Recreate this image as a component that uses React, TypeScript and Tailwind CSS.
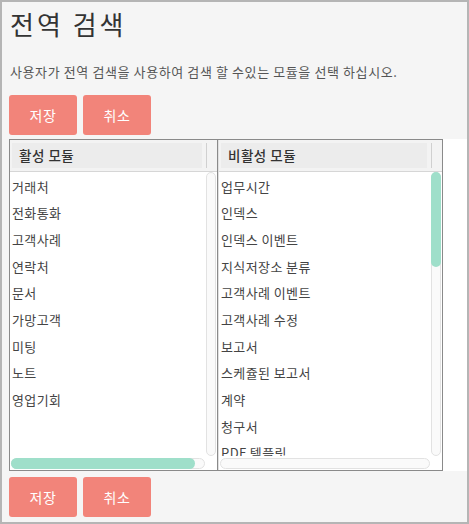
import React from "react";

const activeModules = ["거래처", "전화통화", "고객사례", "연락처", "문서", "가망고객", "미팅", "노트", "영업기회"];
const inactiveModules = [
  "업무시간",
  "인덱스",
  "인덱스 이벤트",
  "지식저장소 분류",
  "고객사례 이벤트",
  "고객사례 수정",
  "보고서",
  "스케쥴된 보고서",
  "계약",
  "청구서",
  "PDF 템플릿",
];

const font = { fontFamily: '"Noto Sans CJK KR", "Noto Sans", sans-serif' };

function Buttons() {
  return (
    <div className="flex gap-[6px] pl-[7px]">
      <button className="h-[40px] w-[68px] rounded-[3px] bg-[#f2847a] text-[14px] tracking-[0.5px] text-white">저장</button>
      <button className="h-[40px] w-[68px] rounded-[3px] bg-[#f2847a] text-[14px] tracking-[0.5px] text-white">취소</button>
    </div>
  );
}

function Panel({
  title,
  items,
  width,
  vThumb,
  hThumb,
}: {
  title: string;
  items: string[];
  width: number;
  vThumb?: boolean;
  hThumb?: boolean;
}) {
  return (
    <div className="flex h-full flex-col" style={{ width }}>
      <div className="flex h-[32px] shrink-0 border-b border-[#d6d6d6] bg-[#f3f3f3] py-[3px] pl-[2px]">
        <div className="flex flex-1 items-center bg-[#ececec] pl-[7px] text-[13.5px] font-medium tracking-[0.5px] text-[#333]">
          {title}
        </div>
        <div className="w-[4px]" />
        <div className="w-[11px] border-l border-[#d0d0d0]" />
      </div>
      <div className="flex min-h-0 flex-1">
        <div className="min-w-0 flex-1 overflow-hidden pt-[1px] pl-[2px]">
          {items.map((it) => (
            <div key={it} className="flex h-[26.7px] items-center whitespace-nowrap text-[13px] tracking-[0.4px] text-[#444]">
              {it}
            </div>
          ))}
        </div>
        <div className="relative mr-[1px] w-[10px] shrink-0 rounded-full border border-[#e2e2e2] bg-[#fafafa]">
          {vThumb && <div className="absolute -left-px -top-px h-[95px] w-[10px] rounded-full bg-[#9fdfca]" />}
        </div>
      </div>
      <div className="flex h-[14px] shrink-0 items-center pl-[1px] pr-[12px]">
        <div className="relative h-[11px] flex-1 rounded-full border border-[#e2e2e2] bg-[#fafafa]">
          {hThumb && <div className="absolute -left-px -top-px h-[11px] w-[184px] rounded-full bg-[#9fdfca]" />}
        </div>
      </div>
    </div>
  );
}

export default function App() {
  return (
    <div className="h-[524px] w-[469px] border-2 border-[#b5b5b5] bg-[#f5f5f5]" style={font}>
      <div className="pt-[6px] pl-[8px] text-[26px] leading-[32px] tracking-[3px] text-[#333]">전역 검색</div>
      <div className="mt-[22px] pl-[8px] text-[13px] leading-[20px] tracking-[0.6px] text-[#555]">
        사용자가 전역 검색을 사용하여 검색 할 수있는 모듈을 선택 하십시오.
      </div>
      <div className="mt-[13px]">
        <Buttons />
      </div>
      <div className="mt-[4px] ml-[7px] flex h-[332px] bg-white">
        <div className="flex h-full border border-[#8a8a8a]">
          <Panel title="활성 모듈" items={activeModules} width={207} hThumb />
          <div className="w-px bg-[#8a8a8a]" />
          <div className="w-px bg-[#e0e0e0]" />
          <Panel title="비활성 모듈" items={inactiveModules} width={223} vThumb />
        </div>
      </div>
      <div className="mt-[6px]">
        <Buttons />
      </div>
    </div>
  );
}
